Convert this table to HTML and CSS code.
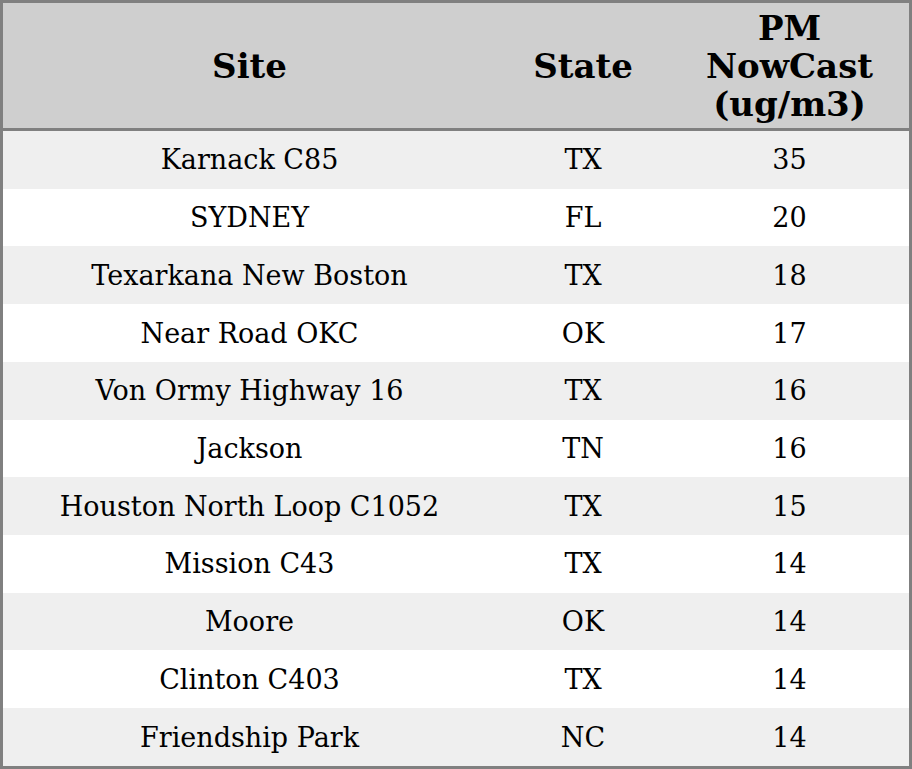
FILE: index.html
```html
<!DOCTYPE html>
<html>
<head>
<meta charset="utf-8">
<link rel="stylesheet" href="styles.css">
</head>
<body>
<table class="data">
  <colgroup>
    <col class="c-site">
    <col class="c-state">
    <col class="c-pm">
  </colgroup>
  <thead>
    <tr><th>Site</th><th>State</th><th>PM<br>NowCast<br>(ug/m3)</th></tr>
  </thead>
  <tbody>
    <tr><td>Karnack C85</td><td>TX</td><td>35</td></tr>
    <tr><td>SYDNEY</td><td>FL</td><td>20</td></tr>
    <tr><td>Texarkana New Boston</td><td>TX</td><td>18</td></tr>
    <tr><td>Near Road OKC</td><td>OK</td><td>17</td></tr>
    <tr><td>Von Ormy Highway 16</td><td>TX</td><td>16</td></tr>
    <tr><td>Jackson</td><td>TN</td><td>16</td></tr>
    <tr><td>Houston North Loop C1052</td><td>TX</td><td>15</td></tr>
    <tr><td>Mission C43</td><td>TX</td><td>14</td></tr>
    <tr><td>Moore</td><td>OK</td><td>14</td></tr>
    <tr><td>Clinton C403</td><td>TX</td><td>14</td></tr>
    <tr><td>Friendship Park</td><td>NC</td><td>14</td></tr>
  </tbody>
</table>
</body>
</html>
```
FILE: styles.css
```css
html, body {
  margin: 0;
  padding: 0;
  background: #ffffff;
}
.data {
  width: 912px;
  table-layout: fixed;
  border-collapse: separate;
  border-spacing: 0;
  border: 3px solid #808080;
  font-family: "DejaVu Serif", serif;
  color: #000;
}
.c-site { width: 493px; }
.c-state { width: 174px; }
.c-pm { width: 239px; }
.data th {
  background: #cfcfcf;
  font-size: 34px;
  font-weight: bold;
  line-height: 38px;
  height: 125px;
  padding: 0;
  text-align: center;
  vertical-align: middle;
  border-bottom: 3px solid #808080;
}
.data td {
  font-size: 27px;
  height: 57.73px;
  padding: 0;
  text-align: center;
  vertical-align: middle;
}
.data tbody tr:nth-child(odd) td {
  background: #efefef;
}
```
